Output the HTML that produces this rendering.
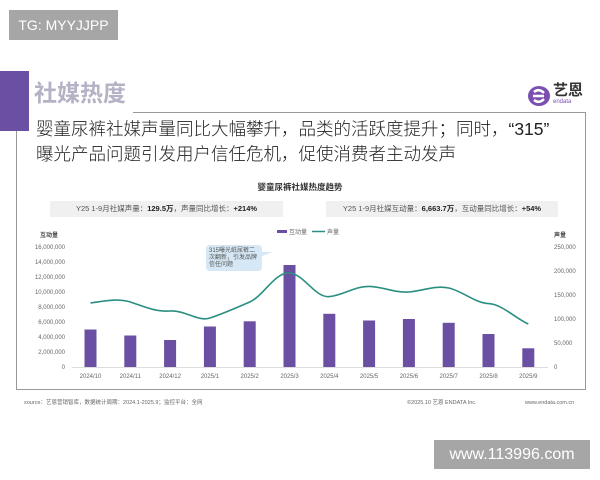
<!DOCTYPE html>
<html><head><meta charset="utf-8"><style>
*{margin:0;padding:0;box-sizing:border-box}
body{width:600px;height:480px;background:#fff;position:relative;overflow:hidden;font-family:"Liberation Sans","Noto Sans CJK SC",sans-serif}
.a{position:absolute;white-space:nowrap}
</style></head><body>
<div class="a" style="left:9px;top:10px;width:109px;height:30px;background:#a6a6a6;color:#fff;font-size:14px;line-height:30px;text-align:center">TG: MYYJJPP</div>
<div class="a" style="left:0;top:71px;width:29px;height:60px;background:#6a4fa3"></div>
<div class="a" style="left:34px;top:78px;font-size:23px;font-weight:bold;color:#b6b2c6;line-height:30px">社媒热度</div>
<div class="a" style="left:133px;top:112px;width:453px;height:1px;background:#999"></div>
<div class="a" style="left:585px;top:112px;width:1px;height:278px;background:#999"></div>
<div class="a" style="left:16px;top:131px;width:1px;height:259px;background:#999"></div>
<div class="a" style="left:16px;top:389px;width:570px;height:1px;background:#999"></div>
<svg class="a" style="left:527px;top:85px" width="26" height="22" viewBox="0 0 26 22"><ellipse cx="12" cy="11" rx="11" ry="10" fill="#7a4fb0"/><path d="M6 11h11M7 7q5-4 10 1M7 15q5 4 10-1" stroke="#fff" stroke-width="2.5" fill="none"/></svg>
<div class="a" style="left:553px;top:82px;font-size:15px;font-weight:bold;color:#333;line-height:18px">艺恩</div>
<div class="a" style="left:553px;top:99px;font-size:6px;color:#7a4fb0;line-height:7px">endata</div>
<div class="a" style="left:36px;top:117px;font-size:17.5px;color:#222;line-height:25px;font-weight:300">婴童尿裤社媒声量同比大幅攀升，品类的活跃度提升；同时，“315”<br>曝光产品问题引发用户信任危机，促使消费者主动发声</div>
<div class="a" style="left:0;width:600px;top:181px;text-align:center;font-size:8.5px;font-weight:bold;color:#333">婴童尿裤社媒热度趋势</div>
<div class="a" style="left:50px;top:201px;width:233px;height:16px;background:#f0f0f0;font-size:7.5px;color:#555;line-height:16px;text-align:center">Y25 1-9月社媒声量：<b style="color:#222">129.5万</b>，声量同比增长：<b style="color:#222">+214%</b></div>
<div class="a" style="left:326px;top:201px;width:232px;height:16px;background:#f0f0f0;font-size:7.5px;color:#555;line-height:16px;text-align:center">Y25 1-9月社媒互动量：<b style="color:#222">6,663.7万</b>，互动量同比增长：<b style="color:#222">+54%</b></div>
<svg class="a" style="left:0;top:0" width="600" height="480" font-family="Liberation Sans,Noto Sans CJK SC,sans-serif">
<g font-size="6" fill="#666">
<rect x="277" y="230" width="10" height="3" fill="#6a4fa3"/><text x="289" y="234">互动量</text>
<line x1="312" y1="231.5" x2="325" y2="231.5" stroke="#2a8f80" stroke-width="1.5"/><text x="327" y="234">声量</text>
<text x="40" y="237" font-weight="bold" fill="#444">互动量</text>
<text x="554" y="237" font-weight="bold" fill="#444">声量</text>
<g text-anchor="end">
<text x="65" y="249">16,000,000</text><text x="65" y="264">14,000,000</text><text x="65" y="279">12,000,000</text><text x="65" y="294">10,000,000</text><text x="65" y="309">8,000,000</text><text x="65" y="324">6,000,000</text><text x="65" y="339">4,000,000</text><text x="65" y="354">2,000,000</text><text x="65" y="369">0</text>
</g>
<text x="554" y="249">250,000</text><text x="554" y="273">200,000</text><text x="554" y="297">150,000</text><text x="554" y="321">100,000</text><text x="554" y="345">50,000</text><text x="554" y="369">0</text>
</g>
<line x1="72" y1="367.5" x2="548" y2="367.5" stroke="#ddd"/>
<g fill="#6a4fa3">
<rect x="84.5" y="329.5" width="12" height="37.5"/>
<rect x="124.3" y="335.5" width="12" height="31.5"/>
<rect x="164.1" y="340" width="12" height="27"/>
<rect x="203.9" y="326.5" width="12" height="40.5"/>
<rect x="243.7" y="321.3" width="12" height="45.7"/>
<rect x="283.5" y="265" width="12" height="102"/>
<rect x="323.3" y="313.8" width="12" height="53.2"/>
<rect x="363.1" y="320.5" width="12" height="46.5"/>
<rect x="402.9" y="319" width="12" height="48"/>
<rect x="442.7" y="322.8" width="12" height="44.2"/>
<rect x="482.5" y="334" width="12" height="33"/>
<rect x="522.3" y="348.3" width="12" height="18.7"/>
</g>
<path d="M90.5 303 C105 301,118 298,130.3 302 S155 312,170 311 S198 322,210 318 S236 308,249.7 302 S275 272,289.5 273 S315 298,329.3 296.6 S355 286,369.1 286.4 S395 293,408.9 292 S435 285,448.7 288 S475 303,488.5 303.6 S515 318,528.3 324" fill="none" stroke="#2a8f80" stroke-width="1.6"/>
<path d="M210 245h48q4 0 4 4v3l11 0l-11 4v11q0 4-4 4h-48q-4 0-4-4v-18q0-4 4-4z" fill="#d6e8f5"/>
<text font-size="6" fill="#555"><tspan x="209" y="252">315曝光纸尿裤二</tspan><tspan x="209" y="259">次翻新，引发品牌</tspan><tspan x="209" y="266">信任问题</tspan></text>
<g font-size="6" fill="#666" text-anchor="middle">
<text x="90.5" y="378">2024/10</text><text x="130.3" y="378">2024/11</text><text x="170.1" y="378">2024/12</text><text x="209.9" y="378">2025/1</text><text x="249.7" y="378">2025/2</text><text x="289.5" y="378">2025/3</text><text x="329.3" y="378">2025/4</text><text x="369.1" y="378">2025/5</text><text x="408.9" y="378">2025/6</text><text x="448.7" y="378">2025/7</text><text x="488.5" y="378">2025/8</text><text x="528.3" y="378">2025/9</text>
</g>
<g font-size="5.5" fill="#666">
<text x="24" y="404">source：艺恩营销智库，数据统计周期：2024.1-2025.9；监控平台：全网</text>
<text x="407" y="404">©2025.10 艺恩 ENDATA Inc.</text>
<text x="525" y="404">www.endata.com.cn</text>
</g>
</svg>
<div class="a" style="left:434px;top:440px;width:156px;height:29px;background:#a6a6a6;color:#fff;font-size:16px;line-height:29px;text-align:center">www.113996.com</div>
</body></html>
